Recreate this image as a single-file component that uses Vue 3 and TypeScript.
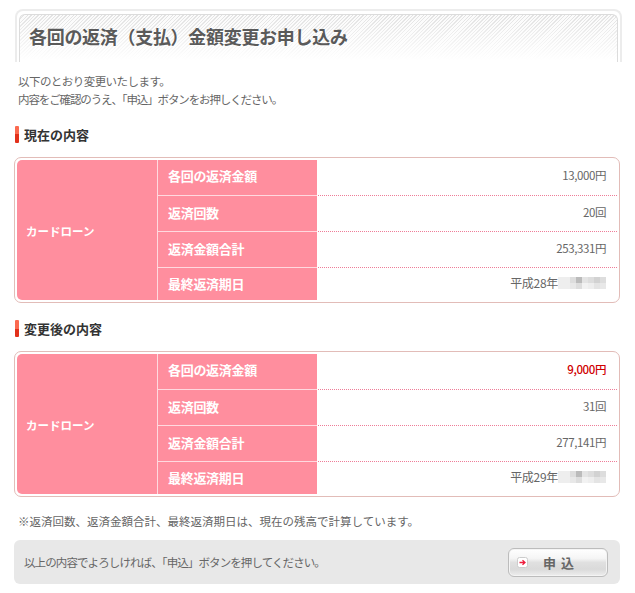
<script setup lang="ts">
interface Row { label: string; value: string; red?: boolean; blur?: boolean }
interface Section { title: string; rows: Row[] }

const blurCells = [
  '#eee','#eee','#ddd','#bbb','#e4e4e4','#ddd','#d2d2d2','#ddd',
  '#eee','#eee','#e8e8e8','#ddd','#f2f2f2','#eee','#e4e4e4','#e8e8e8',
]
const sections: Section[] = [
  { title: '現在の内容', rows: [
    { label: '各回の返済金額', value: '13,000円' },
    { label: '返済回数', value: '20回' },
    { label: '返済金額合計', value: '253,331円' },
    { label: '最終返済期日', value: '平成28年', blur: true },
  ] },
  { title: '変更後の内容', rows: [
    { label: '各回の返済金額', value: '9,000円', red: true },
    { label: '返済回数', value: '31回' },
    { label: '返済金額合計', value: '277,141円' },
    { label: '最終返済期日', value: '平成29年', blur: true },
  ] },
]
</script>

<template>
  <div class="page">
    <div class="title-frame">
      <div class="title-inner">
        <h1>各回の返済（支払）金額変更お申し込み</h1>
      </div>
    </div>
    <p class="intro"><span class="line-a">以下のとおり変更いたします。</span><br /><span class="line-b">内容をご確認のうえ、「申込」ボタンをお押しください。</span></p>

    <section v-for="s in sections" :key="s.title" class="section">
      <h2 class="heading"><span class="mark"></span>{{ s.title }}</h2>
      <div class="card">
        <div class="product">カードローン</div>
        <div class="rows">
          <div v-for="r in s.rows" :key="r.label" class="row">
            <div class="label">{{ r.label }}</div>
            <div class="value" :class="{ red: r.red, dated: r.blur }">
              <span>{{ r.value }}</span>
              <span v-if="r.blur" class="mosaic">
                <i v-for="(c, i) in blurCells" :key="i" :style="{ background: c }"></i>
              </span>
            </div>
          </div>
        </div>
      </div>
    </section>

    <p class="note">※返済回数、返済金額合計、最終返済期日は、現在の残高で計算しています。</p>

    <div class="footer">
      <span class="footer-text">以上の内容でよろしければ、「申込」ボタンを押してください。</span>
      <button class="apply" type="button">
        <span class="icon">
          <svg width="11" height="11" viewBox="0 0 11 11">
            <rect x="0.5" y="0.5" width="10" height="10" rx="2" fill="#fff" stroke="#ccc" />
            <path d="M2.5 5.5H7.5M5.5 3.2L8 5.5L5.5 7.8" fill="none" stroke="#ee1c3c" stroke-width="1.3" />
          </svg>
        </span>
        <span class="apply-text">申 込</span>
      </button>
    </div>
  </div>
</template>

<style scoped>
.page {
  width: 635px;
  height: 593px;
  box-sizing: border-box;
  padding: 9px 14px 0 14px;
  overflow: hidden;
  font-family: "Noto Sans CJK JP", "Liberation Sans", sans-serif;
  font-size: 11.5px;
  color: #666;
  background: #fff;
}
.title-frame {
  height: 53px;
  box-sizing: border-box;
  margin: 0 0 0 1px;
  width: 607px;
  padding: 3px 2px 0 2px;
  border: 2px solid #ececec;
  border-bottom: 0;
  border-radius: 8px 8px 0 0;
}
.title-inner {
  height: 100%;
  box-sizing: border-box;
  border: 1px solid #dcdcdc;
  border-bottom: 0;
  border-radius: 6px 6px 0 0;
  padding-left: 9px;
  background:
    linear-gradient(to bottom, rgba(255,255,255,0), #fff 96%),
    repeating-linear-gradient(135deg, #e2e2e2 0 1px, #fbfbfb 1px 2.5px);
}
h1 {
  margin: 0;
  font-size: 18px;
  line-height: 43px;
  font-weight: 700;
  letter-spacing: -0.3px;
  color: #5a5a5a;
  text-shadow: 1px 1px 0 #fff;
}
.intro {
  margin: 10px 0 0 4px;
  line-height: 18px;
}
.line-a { letter-spacing: -0.55px; }
.line-b { letter-spacing: -1.12px; }
.section { margin-top: 17px; }
.section + .section { margin-top: 16px; }
.heading {
  display: flex;
  align-items: center;
  gap: 5px;
  height: 18px;
  margin: 0 0 14px 1px;
  font-size: 13px;
  font-weight: 700;
  color: #333;
}
.mark {
  width: 4px;
  height: 17px;
  border-radius: 1px;
  background: linear-gradient(to bottom, #fb6a50 0 50%, #e2311b 50% 100%);
}
.card {
  display: flex;
  height: 146px;
  box-sizing: border-box;
  padding: 2px;
  width: 606px;
  border: 1px solid #e2bcb8;
  border-radius: 7px;
}
.product {
  width: 141px;
  flex: none;
  box-sizing: border-box;
  padding: 2px 0 0 9px;
  display: flex;
  align-items: center;
  background: #ff8e9e;
  color: #fff;
  font-weight: 700;
  border-right: 1px solid #ffd9df;
  border-radius: 5px 0 0 5px;
}
.rows { flex: 1; display: flex; flex-direction: column; min-width: 0; }
.row {
  height: 36px;
  box-sizing: border-box;
  display: flex;
  border-bottom: 1px dotted #ee7d98;
}
.row:last-child { height: 32px; border-bottom: 0; }
.label {
  width: 159px;
  flex: none;
  box-sizing: border-box;
  margin-bottom: -1px;
  padding: 0 0 2px 10px;
  display: flex;
  align-items: center;
  background: #ff8e9e;
  color: #fff;
  font-size: 13px;
  letter-spacing: -0.3px;
  font-weight: 700;
  border-bottom: 1px solid #ffd9df;
}
.row:first-child .label { padding-bottom: 4px; }
.row:last-child .label { border-bottom: 0; margin-bottom: 0; }
.value {
  flex: 1;
  box-sizing: border-box;
  padding: 0 11px 3px 0;
  display: flex;
  align-items: center;
  justify-content: flex-end;
  letter-spacing: -0.4px;
}
.row:first-child .value { padding-bottom: 5px; }
.value.dated { font-size: 12px; letter-spacing: -0.3px; }
.value.red { color: #d00000; font-weight: 500; }
.mosaic {
  display: grid;
  grid-template-columns: repeat(8, 6px);
  grid-auto-rows: 6px;
  margin-top: 1px;
}
.mosaic i { display: block; }
.note {
  margin: 16px 0 0 4px;
  line-height: 17px;
  letter-spacing: 0;
}
.footer {
  display: flex;
  align-items: center;
  justify-content: space-between;
  width: 606px;
  height: 44px;
  box-sizing: border-box;
  margin-top: 10px;
  padding: 0 12px 0 10px;
  background: #e8e8e8;
  border-radius: 6px;
}
.footer-text { letter-spacing: -0.9px; }
.apply {
  width: 100px;
  height: 29px;
  padding: 0 0 0 8px;
  display: flex;
  align-items: center;
  border: 1px solid #bcbcbc;
  border-radius: 6px;
  background: linear-gradient(to bottom, #fff 0%, #f5f5f5 35%, #e0e0e0 50%, #dadada 75%, #eee 100%);
  box-shadow: 0 0 0 1px #f4f4f4 inset;
  font-family: inherit;
}
.icon { display: flex; width: 11px; height: 11px; }
.apply-text {
  margin-left: 15px;
  font-size: 13px;
  font-weight: 700;
  color: #666;
  letter-spacing: 1px;
  white-space: pre;
}
</style>
